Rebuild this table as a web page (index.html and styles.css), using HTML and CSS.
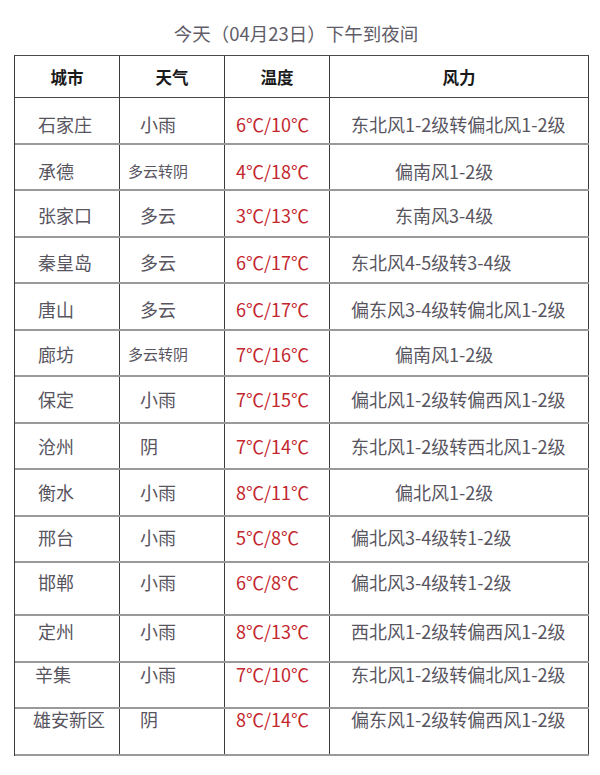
FILE: index.html
```html
<!DOCTYPE html>
<html lang="zh-CN">
<head>
<meta charset="utf-8">
<title>今天（04月23日）下午到夜间</title>
<link rel="stylesheet" href="styles.css">
</head>
<body>
<div class="page">
  <h1 class="title">今天（04月23日）下午到夜间</h1>
  <div class="table">
    <div class="row head">
      <div class="cell">城市</div>
      <div class="cell">天气</div>
      <div class="cell">温度</div>
      <div class="cell">风力</div>
    </div>
    <div class="body">
      <div class="row"><div class="cell city">石家庄</div><div class="cell wx">小雨</div><div class="cell temp">6℃/10℃</div><div class="cell wind">东北风1-2级转偏北风1-2级</div></div>
      <div class="row"><div class="cell city">承德</div><div class="cell wx small">多云转阴</div><div class="cell temp">4℃/18℃</div><div class="cell wind short">偏南风1-2级</div></div>
      <div class="row"><div class="cell city">张家口</div><div class="cell wx">多云</div><div class="cell temp">3℃/13℃</div><div class="cell wind short">东南风3-4级</div></div>
      <div class="row"><div class="cell city">秦皇岛</div><div class="cell wx">多云</div><div class="cell temp">6℃/17℃</div><div class="cell wind">东北风4-5级转3-4级</div></div>
      <div class="row"><div class="cell city">唐山</div><div class="cell wx">多云</div><div class="cell temp">6℃/17℃</div><div class="cell wind">偏东风3-4级转偏北风1-2级</div></div>
      <div class="row"><div class="cell city">廊坊</div><div class="cell wx small">多云转阴</div><div class="cell temp">7℃/16℃</div><div class="cell wind short">偏南风1-2级</div></div>
      <div class="row"><div class="cell city">保定</div><div class="cell wx">小雨</div><div class="cell temp">7℃/15℃</div><div class="cell wind">偏北风1-2级转偏西风1-2级</div></div>
      <div class="row"><div class="cell city">沧州</div><div class="cell wx">阴</div><div class="cell temp">7℃/14℃</div><div class="cell wind">东北风1-2级转西北风1-2级</div></div>
      <div class="row"><div class="cell city">衡水</div><div class="cell wx">小雨</div><div class="cell temp">8℃/11℃</div><div class="cell wind short">偏北风1-2级</div></div>
      <div class="row"><div class="cell city">邢台</div><div class="cell wx">小雨</div><div class="cell temp">5℃/8℃</div><div class="cell wind">偏北风3-4级转1-2级</div></div>
      <div class="row tall"><div class="cell city">邯郸</div><div class="cell wx">小雨</div><div class="cell temp">6℃/8℃</div><div class="cell wind">偏北风3-4级转1-2级</div></div>
      <div class="row"><div class="cell city">定州</div><div class="cell wx">小雨</div><div class="cell temp">8℃/13℃</div><div class="cell wind">西北风1-2级转偏西风1-2级</div></div>
      <div class="row"><div class="cell city">辛集</div><div class="cell wx">小雨</div><div class="cell temp">7℃/10℃</div><div class="cell wind">东北风1-2级转偏北风1-2级</div></div>
      <div class="row"><div class="cell city">雄安新区</div><div class="cell wx">阴</div><div class="cell temp">8℃/14℃</div><div class="cell wind">偏东风1-2级转偏西风1-2级</div></div>
    </div>
  </div>
</div>
</body>
</html>
```
FILE: styles.css
```css
* { box-sizing: border-box; }
html, body { margin: 0; padding: 0; background: #ffffff; }
body {
  width: 600px;
  font-family: "Noto Sans CJK SC", "Noto Sans", sans-serif;
  color: #58555f;
}
.page { width: 600px; }
.title {
  margin: 0 0 10px 0;
  padding: 21px 8px 0 0;
  height: 45px;
  font-size: 18.5px;
  line-height: 24px;
  font-weight: 400;
  text-align: center;
  color: #615d68;
}
.table {
  margin-left: 14px;
  width: 575px;
  border-left: 1px solid #3c3c3c;
  border-top: 1px solid #4a4a4a;
}
.row {
  display: grid;
  grid-template-columns: 105px 105px 105px 259px;
  height: 46.5px;
  border-bottom: 2px solid #9a9a9a;
}
.row.tall { height: 53px; }
.row.head {
  height: 42px;
  border-bottom: 1px solid #4a4a4a;
}
.cell {
  border-right: 1px solid #3c3c3c;
  font-size: 18px;
  line-height: 20px;
  white-space: nowrap;
}
.head .cell {
  display: flex;
  align-items: center;
  justify-content: center;
  font-size: 16.5px;
  font-weight: 700;
  color: #1a1a1a;
  padding-top: 1px;
}
.city { padding-left: 23px; }
.wx { padding-left: 20px; }
.wx.small { padding-left: 8px; font-size: 15px; }
.temp { padding-left: 11px; color: #c3262d; }
.wind { padding-left: 21px; }
.wind.short { padding-left: 65px; }

.body .row:nth-child(1) .cell { padding-top: 16px; }
.body .row:nth-child(2) .cell { padding-top: 16px; }
.body .row:nth-child(3) .cell { padding-top: 14px; }
.body .row:nth-child(4) .cell { padding-top: 14px; }
.body .row:nth-child(5) .cell { padding-top: 15px; }
.body .row:nth-child(6) .cell { padding-top: 13px; }
.body .row:nth-child(7) .cell { padding-top: 12px; }
.body .row:nth-child(8) .cell { padding-top: 12px; }
.body .row:nth-child(9) .cell { padding-top: 12px; }
.body .row:nth-child(10) .cell { padding-top: 10px; }
.body .row:nth-child(11) .cell { padding-top: 9px; }
.body .row:nth-child(12) .cell { padding-top: 5px; }
.body .row:nth-child(13) .cell { padding-top: 1px; }
.body .row:nth-child(14) .cell { padding-top: 0; }
.body .row:nth-child(13) .city { padding-left: 20px; }
.body .row:nth-child(14) .city { padding-left: 18px; }
```
